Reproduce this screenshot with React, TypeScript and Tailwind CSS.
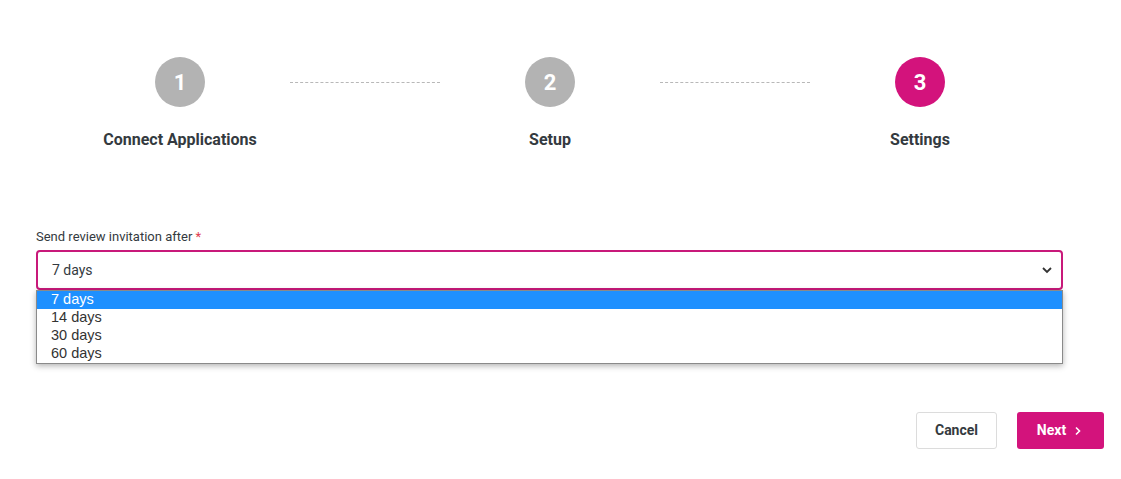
import React from 'react';

const steps = [
  { n: 1, label: 'Connect Applications', active: false },
  { n: 2, label: 'Setup', active: false },
  { n: 3, label: 'Settings', active: true },
];

const options = ['7 days', '14 days', '30 days', '60 days'];

function Step({ n, label, active }: { n: number; label: string; active: boolean }) {
  return (
    <div className="w-[220px] flex flex-col items-center">
      <div
        className={`w-[50px] h-[50px] rounded-full flex items-center justify-center text-white text-[22px] font-bold ${
          active ? 'bg-[#d3137c]' : 'bg-[#b3b3b3]'
        }`}
      >
        {n}
      </div>
      <div className="mt-[23px] text-[16px] font-bold text-[#343a40] leading-[20px]">{label}</div>
    </div>
  );
}

export default function App() {
  return (
    <div className="w-[1121px] h-[479px] bg-white font-['Roboto',sans-serif] relative">
      {/* Stepper */}
      <div className="pt-[57px] pl-[70px] flex items-start">
        {steps.map((s, i) => (
          <React.Fragment key={s.n}>
            <Step {...s} />
            {i < steps.length - 1 && (
              <div className="w-[150px] mt-[25px] border-t border-dashed border-[#b8b8b8]" />
            )}
          </React.Fragment>
        ))}
      </div>

      {/* Form */}
      <div className="mt-[79px] pl-[36px] pr-[58px]">
        <div className="text-[13px] text-[#343a40] leading-[16px]">
          Send review invitation after <span className="text-[#e03c4d]">*</span>
        </div>
        <div className="relative mt-[5px]">
          <div className="h-[40px] border-2 border-[#c8197a] rounded-[4px] flex items-center justify-between pl-[14px] pr-[8px]">
            <span className="text-[14px] text-[#343a40]">7 days</span>
            <svg width="12" height="12" viewBox="0 0 12 12" fill="none">
              <path d="M2 4l4 4 4-4" stroke="#333" strokeWidth="1.8" />
            </svg>
          </div>
          {/* Open list */}
          <div className="absolute left-0 right-0 top-[40px] bg-white border border-[#8a8a8a] shadow-[0_2px_6px_rgba(0,0,0,0.3)] z-10">
            {options.map((o, i) => (
              <div
                key={o}
                className={`h-[18px] leading-[17px] pl-[14px] text-[14.5px] font-['Liberation_Sans',sans-serif] ${
                  i === 0 ? 'bg-[#1e90ff] text-white' : 'text-[#333]'
                }`}
              >
                {o}
              </div>
            ))}
          </div>
        </div>
      </div>

      {/* Buttons */}
      <div className="absolute left-[916px] top-[412px] flex gap-[20px]">
        <button className="w-[81px] h-[37px] border border-[#dcdcdc] rounded-[3px] bg-white text-[14px] font-bold text-[#343a40]">
          Cancel
        </button>
        <button className="w-[87px] h-[37px] rounded-[3px] bg-[#d3137c] text-white text-[14px] font-bold flex items-center justify-center gap-[8px] pr-[2px]">
          Next
          <svg width="8" height="10" viewBox="0 0 8 10" fill="none">
            <path d="M2 1.5l3.5 3.5L2 8.5" stroke="white" strokeWidth="1.6" />
          </svg>
        </button>
      </div>
    </div>
  );
}
